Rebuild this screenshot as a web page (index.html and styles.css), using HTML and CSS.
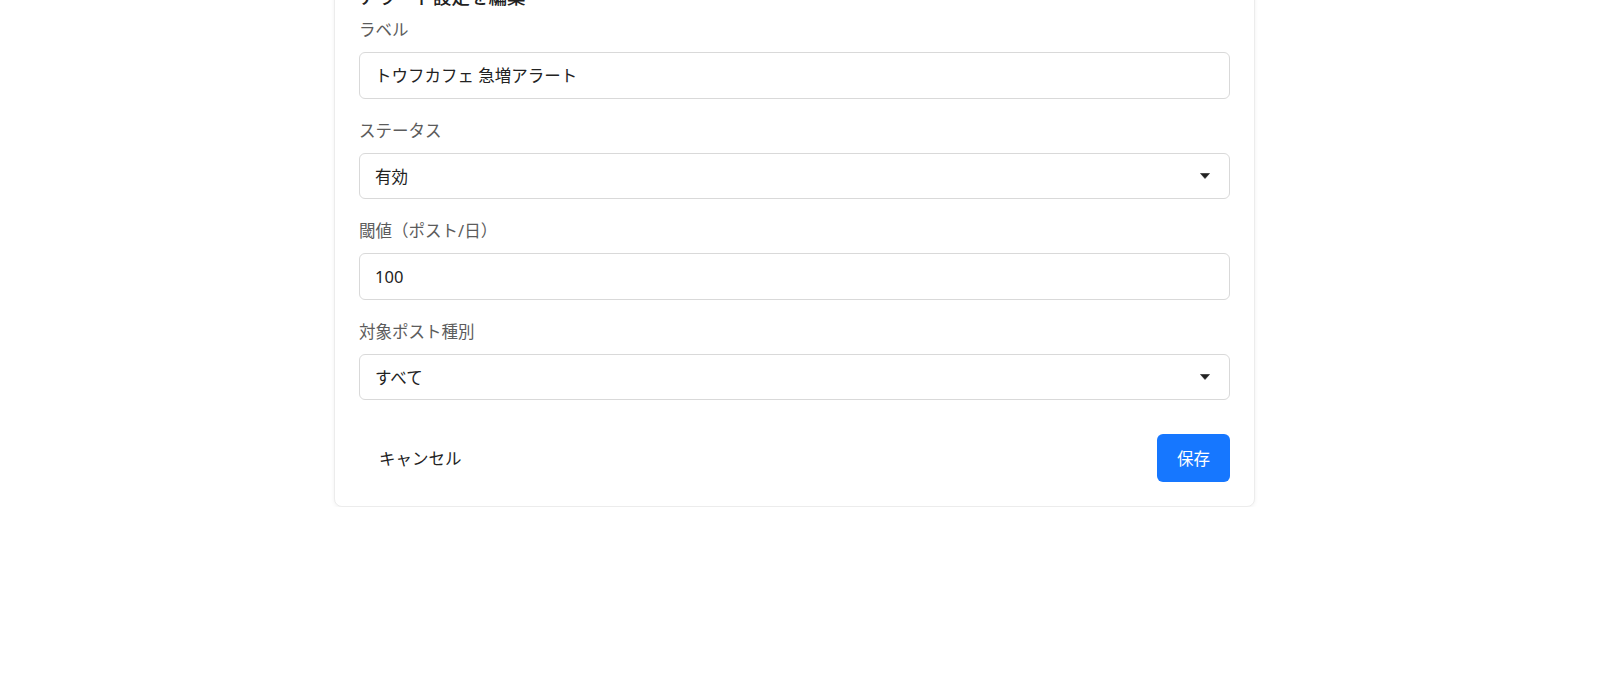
FILE: index.html
```html
<!DOCTYPE html>
<html lang="ja">
<head>
<meta charset="utf-8">
<title>アラート設定を編集</title>
<link rel="stylesheet" href="styles.css">
</head>
<body>
<div class="page">
  <form class="card">
    <h2 class="title">アラート設定を編集</h2>
    <div class="fields">
      <div class="field">
        <label class="label">ラベル</label>
        <div class="control">トウフカフェ 急増アラート</div>
      </div>
      <div class="field">
        <label class="label">ステータス</label>
        <div class="control select"><span>有効</span><svg class="caret" width="10" height="6" viewBox="0 0 10 6"><path d="M0.5 0.5 L9.5 0.5 L5 5.5 Z" fill="#222" stroke="#222" stroke-width="0.6" stroke-linejoin="round"/></svg></div>
      </div>
      <div class="field">
        <label class="label">閾値（ポスト/日）</label>
        <div class="control">100</div>
      </div>
      <div class="field">
        <label class="label">対象ポスト種別</label>
        <div class="control select"><span>すべて</span><svg class="caret" width="10" height="6" viewBox="0 0 10 6"><path d="M0.5 0.5 L9.5 0.5 L5 5.5 Z" fill="#222" stroke="#222" stroke-width="0.6" stroke-linejoin="round"/></svg></div>
      </div>
    </div>
    <div class="actions">
      <button type="button" class="btn btn-text">キャンセル</button>
      <button type="button" class="btn btn-primary">保存</button>
    </div>
  </form>
</div>
</body>
</html>
```
FILE: styles.css
```css
html, body {
  margin: 0;
  padding: 0;
  background: #ffffff;
}
body {
  font-family: "Noto Sans", "Noto Sans CJK JP", sans-serif;
  color: #222222;
}
.page {
  display: flex;
  justify-content: center;
  padding-right: 11px;
}
.card {
  box-sizing: border-box;
  width: 921px;
  margin-top: -42px;
  padding: 24px;
  border: 1px solid #ececec;
  border-radius: 8px;
  background: #fff;
  box-shadow: 0 1px 4px rgba(0, 0, 0, 0.06);
  display: flex;
  flex-direction: column;
}
.title {
  margin: 0 0 7px;
  font-size: 18.5px;
  line-height: 28px;
  font-weight: 500;
  color: #222;
}
.fields {
  display: flex;
  flex-direction: column;
  gap: 20px;
}
.field {
  display: flex;
  flex-direction: column;
}
.label {
  font-size: 16.5px;
  line-height: 24px;
  color: #5c5c5c;
  margin-bottom: 10px;
}
.control {
  box-sizing: border-box;
  height: 46.5px;
  border: 1px solid #d9d9d9;
  border-radius: 6px;
  padding: 0 15px;
  display: flex;
  align-items: center;
  font-size: 16.5px;
  color: #222;
}
.select {
  justify-content: space-between;
  padding-right: 19px;
}
.caret {
  display: block;
}
.actions {
  margin-top: 34px;
  display: flex;
  justify-content: space-between;
  align-items: center;
}
.btn {
  height: 48px;
  padding: 0 20px;
  border: none;
  border-radius: 6px;
  font-family: "Noto Sans", "Noto Sans CJK JP", sans-serif;
  font-size: 16.5px;
  cursor: pointer;
}
.btn-text {
  background: transparent;
  color: #222;
}
.btn-primary {
  background: #1677ff;
  color: #fff;
  padding: 0 20px;
}
```
